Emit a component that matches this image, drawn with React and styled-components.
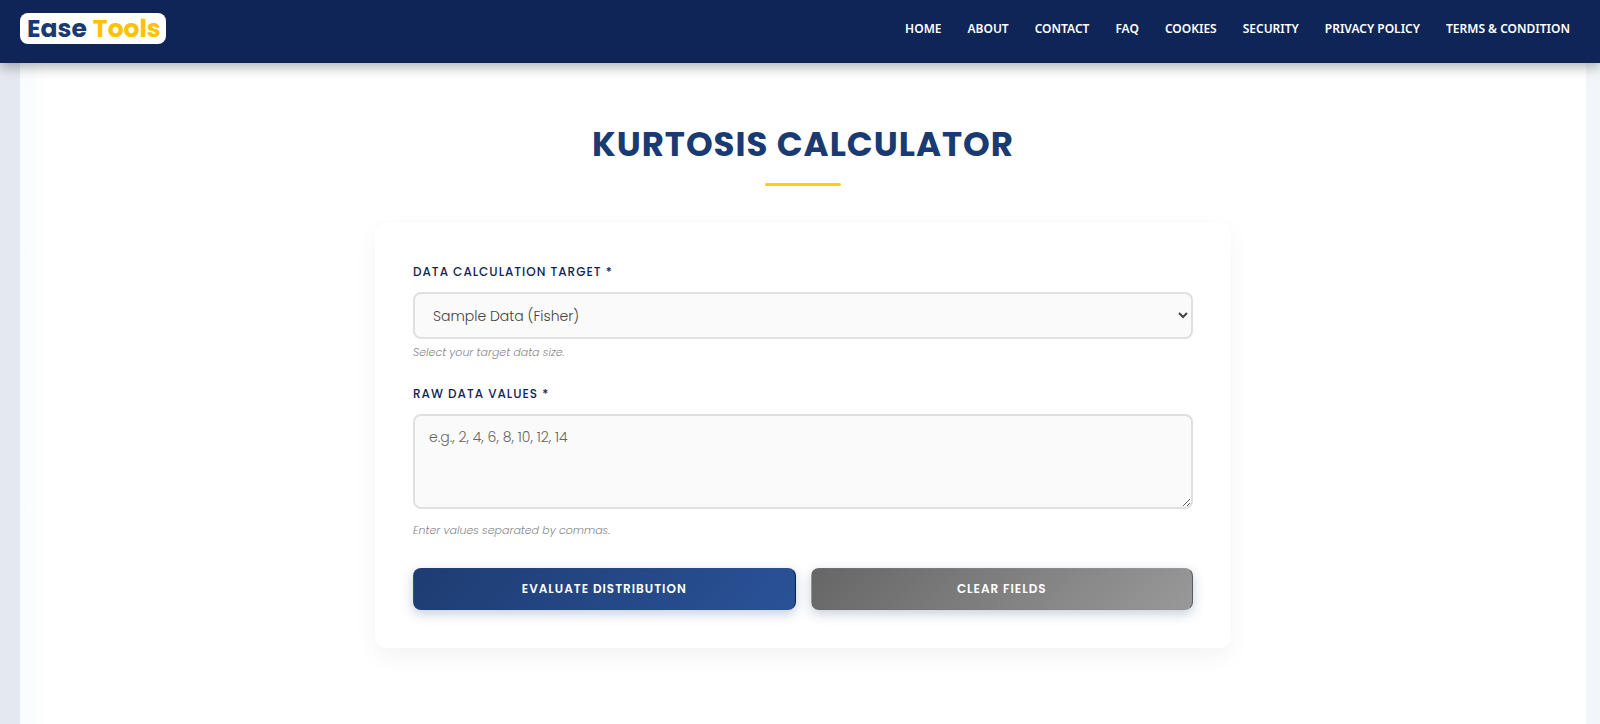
import React, { useState } from "react";
import styled, { createGlobalStyle } from "styled-components";

const display = `Poppins, Inter, "Open Sans", sans-serif`;

const GlobalStyle = createGlobalStyle`
  *, *::before, *::after { box-sizing: border-box; }
  body {
    margin: 0;
    font-family: ${display};
    background: linear-gradient(90deg, #e4e8f0, #f3f6f9);
  }
`;

const Page = styled.div`
  display: flex;
  flex-direction: column;
  min-height: 100vh;
`;

const Header = styled.header`
  position: relative;
  z-index: 1;
  display: flex;
  align-items: center;
  justify-content: space-between;
  padding: 13px 30px 19px 20px;
  background: #0f2557;
  box-shadow: 0 4px 12px rgba(0, 0, 0, 0.3);
`;

const Logo = styled.a`
  display: flex;
  align-items: center;
  gap: 6px;
  height: 31px;
  padding: 0 5px 0 7px;
  border-radius: 8px;
  background: #fff;
  color: #1a3a72;
  font-size: 25px;
  font-weight: 700;
  text-decoration: none;
`;

const LogoAccent = styled.span`
  color: #ffc107;
`;

const Nav = styled.nav`
  display: flex;
  gap: 26px;
`;

const NavLink = styled.a`
  color: #fff;
  font-family: "Segoe UI", "Noto Sans", "Open Sans", sans-serif;
  font-size: 12px;
  font-weight: 600;
  line-height: 20px;
  text-decoration: none;
  text-transform: uppercase;
`;

const Main = styled.main`
  flex: 1;
  margin: 0 14px 0 20px;
  padding: 56px 20px 76px;
  background: linear-gradient(90deg, #f9fbfc, #fff 28px);
`;

const Title = styled.h1`
  margin: 0;
  color: #1a3a72;
  font-size: 34px;
  font-weight: 700;
  line-height: 50px;
  letter-spacing: 1px;
  text-align: center;
  text-transform: uppercase;

  &::after {
    content: "";
    display: block;
    width: 76px;
    height: 3px;
    margin: 14px auto 0;
    border-radius: 2px;
    background: #ffd000;
  }
`;

const Card = styled.form`
  max-width: 856px;
  margin: 37px auto 0;
  padding: 38px;
  border-radius: 12px;
  background: #fff;
  box-shadow: 0 8px 24px rgba(0, 0, 0, 0.05);
`;

const Field = styled.div`
  display: flex;
  flex-direction: column;
  margin-bottom: 22px;
`;

const Label = styled.label`
  margin-bottom: 9px;
  color: #0f2557;
  font-size: 12px;
  font-weight: 500;
  line-height: 22px;
  letter-spacing: 1px;
  text-transform: uppercase;
`;

const control = `
  width: 100%;
  padding: 10px 14px;
  border: 2px solid #e0e0e0;
  border-radius: 8px;
  background: #fafafa;
  color: #444;
  font-family: ${display};
  font-size: 14px;
  font-weight: 300;
  line-height: 22px;
`;

const Select = styled.select`
  ${control}
  height: 47px;
`;

const Textarea = styled.textarea`
  ${control}
  height: 95px;
  margin-bottom: 8px;
  resize: vertical;

  &::placeholder { color: #666; }
`;

const Hint = styled.small`
  margin-top: 4px;
  color: #888;
  font-size: 11px;
  font-style: italic;
  font-weight: 300;
  line-height: 18px;
`;

const Actions = styled.div`
  display: grid;
  grid-template-columns: 1fr 1fr;
  gap: 15px;
  margin-top: 29px;
`;

const Button = styled.button`
  height: 42px;
  border: 1px solid transparent;
  border-right-color: ${(p) => (p.$muted ? "#5c5c5c" : "#0d1f4d")};
  border-radius: 8px;
  background: ${(p) =>
    p.$muted
      ? "linear-gradient(135deg, #666, #999)"
      : "linear-gradient(135deg, #1e3c72, #2a5298)"};
  box-shadow: 0 4px 12px rgba(30, 60, 114, 0.25);
  color: #fff;
  font-family: ${display};
  font-size: 12px;
  font-weight: 600;
  letter-spacing: 1px;
  text-transform: uppercase;
  cursor: pointer;
`;

const links = ["Home", "About", "Contact", "FAQ", "Cookies", "Security", "Privacy Policy", "Terms & Condition"];

export default function App() {
  const [target, setTarget] = useState("sample");
  const [values, setValues] = useState("");

  const clear = () => {
    setTarget("sample");
    setValues("");
  };

  return (
    <Page>
      <GlobalStyle />
      <Header>
        <Logo href="#home">
          <span>Ease</span>
          <LogoAccent>Tools</LogoAccent>
        </Logo>
        <Nav>
          {links.map((link) => (
            <NavLink key={link} href="#">{link}</NavLink>
          ))}
        </Nav>
      </Header>
      <Main>
        <Title>Kurtosis Calculator</Title>
        <Card onSubmit={(e) => e.preventDefault()}>
          <Field>
            <Label htmlFor="target">Data Calculation Target *</Label>
            <Select id="target" value={target} onChange={(e) => setTarget(e.target.value)}>
              <option value="sample">Sample Data (Fisher)</option>
              <option value="population">Population Data</option>
            </Select>
            <Hint>Select your target data size.</Hint>
          </Field>
          <Field>
            <Label htmlFor="values">Raw Data Values *</Label>
            <Textarea
              id="values"
              placeholder="e.g., 2, 4, 6, 8, 10, 12, 14"
              value={values}
              onChange={(e) => setValues(e.target.value)}
            />
            <Hint>Enter values separated by commas.</Hint>
          </Field>
          <Actions>
            <Button type="submit">Evaluate Distribution</Button>
            <Button type="button" $muted onClick={clear}>Clear Fields</Button>
          </Actions>
        </Card>
      </Main>
    </Page>
  );
}
